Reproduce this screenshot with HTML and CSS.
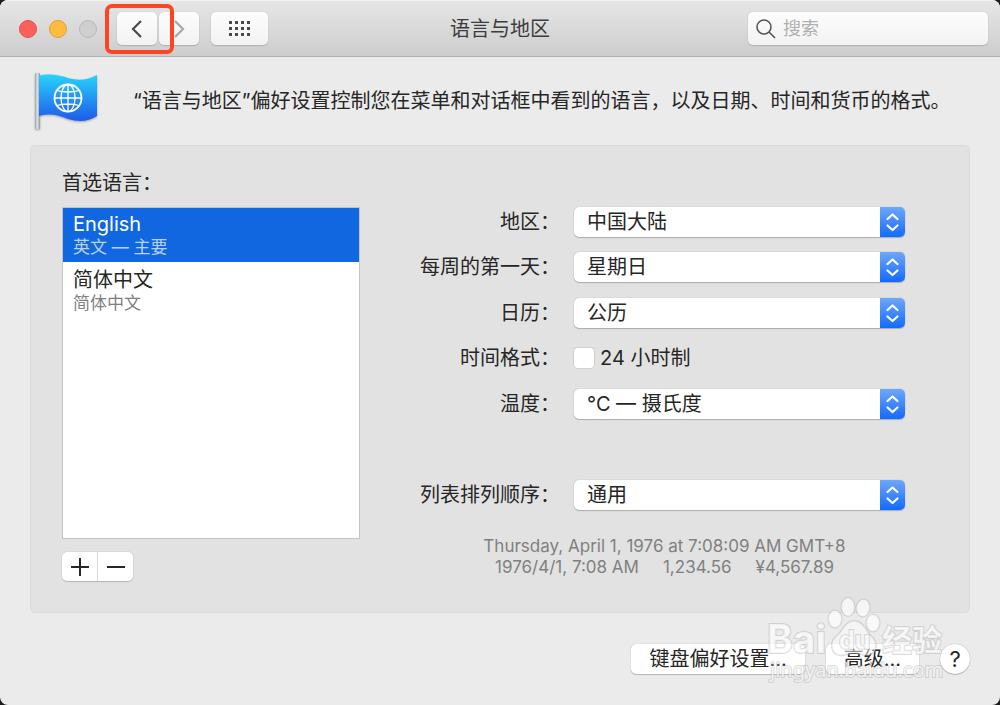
FILE: index.html
```html
<!DOCTYPE html>
<html lang="zh-CN">

<head>
    <meta charset="UTF-8">
    <meta name="viewport" content="width=device-width, initial-scale=1.0">
    <title>语言与地区</title>
    <link rel="stylesheet" href="styles.css">
</head>

<body>
    <div class="window">
        <header class="titlebar">
            <div class="tools">
                <div class="lights">
                    <button class="light red" aria-label="关闭"></button>
                    <button class="light yellow" aria-label="最小化"></button>
                    <button class="light grey" aria-label="缩放" disabled></button>
                </div>
                <div class="nav">
                    <button class="tool back" aria-label="后退">
                        <svg width="12" height="20" viewBox="0 0 12 20">
                            <path d="M10 2 L2 10 L10 18" />
                        </svg>
                    </button>
                    <button class="tool forward" aria-label="前进">
                        <svg width="12" height="20" viewBox="0 0 12 20">
                            <path d="M2 2 L10 10 L2 18" />
                        </svg>
                    </button>
                    <span class="mark"></span>
                </div>
                <button class="tool all" aria-label="显示全部">
                    <svg width="21" height="15" viewBox="0 0 21 15">
                        <path d="M0 1.500h21M0 7.500h21M0 13.500h21" />
                    </svg>
                </button>
            </div>
            <h1 class="title">语言与地区</h1>
            <label class="search">
                <svg width="20" height="20" viewBox="0 0 20 20">
                    <circle cx="8" cy="8" r="7" />
                    <path d="M13 13 L19 19" />
                </svg>
                <input type="search" placeholder="搜索" aria-label="搜索">
            </label>
        </header>

        <main class="content">
            <div class="intro">
                <svg class="flag" width="68" height="62" viewBox="0 0 68 62">
                    <defs>
                        <linearGradient id="cloth" x1="0" y1="0" x2="0" y2="1">
                            <stop offset="0" stop-color="#28d3fb" />
                            <stop offset="1" stop-color="#1f59ea" />
                        </linearGradient>
                        <linearGradient id="pole" x1="0" y1="0" x2="1" y2="0">
                            <stop offset="0" stop-color="#9aa3a9" />
                            <stop offset="0.45" stop-color="#dfe4e7" />
                            <stop offset="1" stop-color="#8f989e" />
                        </linearGradient>
                    </defs>
                    <rect x="5" y="3" width="5" height="56" rx="1" fill="url(#pole)" />
                    <path d="M9 6 C18 3 29 5 38 8 C49 11 58 10 67 5 V46 C58 52 48 52 38 49 C29 45 19 43 9 46 Z"
                        fill="url(#cloth)" />
                    <g fill="none" stroke="#fff" stroke-width="1.3">
                        <circle cx="38" cy="28" r="13.5" stroke-width="1.8" />
                        <ellipse cx="38" cy="28" rx="7" ry="13.5" />
                        <path d="M38 14.5v27M24.5 28h27M27 20.500c6 2 16 2 22 0M27 35.500c6 -2 16 -2 22 0" />
                    </g>
                </svg>
                <p>“语言与地区”偏好设置控制您在菜单和对话框中看到的语言，以及日期、时间和货币的格式。</p>
            </div>

            <div class="panel">
                <section class="languages">
                    <h2 id="preferred">首选语言：</h2>
                    <ul class="list" role="listbox" aria-labelledby="preferred">
                        <li class="selected" role="option" aria-selected="true">
                            <span>English</span>
                            <small>英文 — 主要</small>
                        </li>
                        <li role="option" aria-selected="false">
                            <span>简体中文</span>
                            <small>简体中文</small>
                        </li>
                    </ul>
                    <div class="edit">
                        <button aria-label="添加">
                            <svg width="18" height="18" viewBox="0 0 18 18">
                                <path d="M0 9h18M9 0v18" />
                            </svg>
                        </button>
                        <button aria-label="移除">
                            <svg width="18" height="18" viewBox="0 0 18 18">
                                <path d="M0 9h18" />
                            </svg>
                        </button>
                    </div>
                </section>

                <form class="fields">
                    <div class="group">
                        <label class="caption" for="region">地区：</label>
                        <div class="popup">
                            <select id="region">
                                <option>中国大陆</option>
                            </select>
                            <svg viewBox="0 0 25 30">
                                <path d="M7.500 12 L12.500 7.500 L17.500 12M7.500 18.500 L12.500 23 L17.500 18.500" />
                            </svg>
                        </div>
                        <label class="caption" for="week">每周的第一天：</label>
                        <div class="popup">
                            <select id="week">
                                <option>星期日</option>
                            </select>
                            <svg viewBox="0 0 25 30">
                                <path d="M7.500 12 L12.500 7.500 L17.500 12M7.500 18.500 L12.500 23 L17.500 18.500" />
                            </svg>
                        </div>
                    </div>
                    <div class="group">
                        <label class="caption" for="calendar">日历：</label>
                        <div class="popup">
                            <select id="calendar">
                                <option>公历</option>
                            </select>
                            <svg viewBox="0 0 25 30">
                                <path d="M7.500 12 L12.500 7.500 L17.500 12M7.500 18.500 L12.500 23 L17.500 18.500" />
                            </svg>
                        </div>
                        <span class="caption">时间格式：</span>
                        <label class="check">
                            <input type="checkbox">
                            24 小时制
                        </label>
                    </div>
                    <div class="group">
                        <label class="caption" for="temperature">温度：</label>
                        <div class="popup">
                            <select id="temperature">
                                <option>°C — 摄氏度</option>
                            </select>
                            <svg viewBox="0 0 25 30">
                                <path d="M7.500 12 L12.500 7.500 L17.500 12M7.500 18.500 L12.500 23 L17.500 18.500" />
                            </svg>
                        </div>
                    </div>
                    <div class="group apart">
                        <label class="caption" for="order">列表排列顺序：</label>
                        <div class="popup">
                            <select id="order">
                                <option>通用</option>
                            </select>
                            <svg viewBox="0 0 25 30">
                                <path d="M7.500 12 L12.500 7.500 L17.500 12M7.500 18.500 L12.500 23 L17.500 18.500" />
                            </svg>
                        </div>
                    </div>
                    <div class="sample">
                        <div>Thursday, April 1, 1976 at 7:08:09 AM GMT+8</div>
                        <div class="numbers">
                            <span>1976/4/1, 7:08 AM</span>
                            <span>1,234.56</span>
                            <span>¥4,567.89</span>
                        </div>
                    </div>
                </form>
            </div>

            <footer class="actions">
                <button class="push">键盘偏好设置...</button>
                <button class="push">高级...</button>
                <button class="help" aria-label="帮助">?</button>
            </footer>
        </main>

        <div class="watermark">
            <svg width="190" height="94" viewBox="0 0 190 94">
                <ellipse cx="75" cy="22" rx="6.500" ry="8.500" />
                <ellipse cx="88" cy="10" rx="6.500" ry="9" />
                <ellipse cx="103" cy="11" rx="6.500" ry="8.500" transform="rotate(8 103 11)" />
                <ellipse cx="113" cy="26" rx="6.500" ry="8.500" />
                <path class="pad" d="M94 24 C103 24 106 34 111 39 C118 45 118 57 107 58 C102 58 99 56 94 56 C88 56 84 59 79 58 C70 56 70 44 77 39 C83 34 85 24 94 24 Z" />
                <text class="logo" x="7" y="56">Bai</text>
                <text class="du" x="79" y="52">du</text>
                <text class="word" x="122" y="54">经验</text>
                <text class="site" x="10" y="80">jingyan.baidu.com</text>
            </svg>
        </div>
    </div>
</body>

</html>
```
FILE: styles.css
```css
* {
    box-sizing: border-box;
}

body {
    margin: 0;
    background: #1c1c1c;
    font-family: Inter, "Noto Sans CJK SC", sans-serif;
    font-size: 20px;
    line-height: 30px;
    color: #262626;
}

h1,
h2,
p,
ul {
    margin: 0;
    padding: 0;
    font-size: 20px;
    font-weight: 400;
}

button,
input,
select {
    margin: 0;
    padding: 0;
    border: 0;
    font: inherit;
    color: inherit;
}

svg {
    display: block;
}

.window {
    position: relative;
    min-height: 100vh;
    background: #ebebeb;
    border-radius: 8px;
    overflow: hidden;
}

/* title bar */

.titlebar {
    display: grid;
    grid-template-columns: 1fr auto 1fr;
    align-items: center;
    height: 57px;
    padding: 0 12px;
    background: linear-gradient(#e6e6e6, #cdcdcd);
    border-top: 1px solid #f3f3f3;
    border-bottom: 1px solid #b0b0b0;
}

.tools,
.lights,
.nav {
    display: flex;
    align-items: center;
}

.tools {
    gap: 12px;
    padding-left: 7px;
}

.lights {
    gap: 12px;
    margin-right: 8px;
}

.light {
    width: 18px;
    height: 18px;
    border: 1px solid;
    border-radius: 50%;
}

.red {
    background: #fc605c;
    border-color: #e2504b;
}

.yellow {
    background: #fdbc40;
    border-color: #dfa034;
}

.grey {
    background: #cfcfcf;
    border-color: #b9b9b9;
}

.nav {
    position: relative;
    gap: 2px;
}

.tool {
    display: flex;
    align-items: center;
    justify-content: center;
    width: 40px;
    height: 33px;
    background: linear-gradient(#fdfdfd, #f2f2f2);
    border-radius: 5px;
    box-shadow: 0 0 1px 0 #a8a8a8, 0 1px 1px 0 #b0b0b0;
}

.tool path {
    fill: none;
    stroke: #4a4a4a;
    stroke-width: 2.2;
}

.forward path {
    stroke: #a8a8a8;
}

.all {
    width: 57px;
}

.all path {
    stroke-width: 3;
    stroke-dasharray: 3;
}

/* red frame round the back button */
.mark {
    position: absolute;
    left: -12px;
    top: -8px;
    width: 69px;
    height: 50px;
    border: 4px solid #fb4523;
    border-radius: 7px;
}

.title {
    color: #3c3c3c;
}

.search {
    display: flex;
    align-items: center;
    justify-self: end;
    gap: 7px;
    width: 240px;
    height: 33px;
    padding: 0 8px;
    background: linear-gradient(#fdfdfd, #f2f2f2);
    border-radius: 5px;
    box-shadow: 0 0 1px 0 #a8a8a8, 0 1px 1px 0 #b0b0b0;
}

.search svg {
    flex: none;
    fill: none;
    stroke: #555;
    stroke-width: 1.6;
}

.search input {
    width: 100%;
    background: none;
    font-size: 18px;
    outline: none;
}

.search input::placeholder {
    color: #b0b0b0;
}

/* content */

.content {
    padding: 12px 30px 30px;
}

.intro {
    display: flex;
    align-items: center;
    gap: 35px;
    height: 64px;
}

.flag {
    flex: none;
    filter: drop-shadow(0 1px 1px rgba(0, 0, 0, 0.3));
}

.panel {
    display: flex;
    gap: 60px;
    margin-top: 12px;
    padding: 22px 64px 31px 31px;
    background: #e2e2e2;
    border: 1px solid #dadada;
    border-radius: 5px;
}

.languages {
    display: flex;
    flex-direction: column;
    width: 298px;
}

.list {
    height: 332px;
    margin-top: 9px;
    background: #fff;
    border: 1px solid #c4c4c4;
    list-style: none;
}

.list li {
    display: flex;
    flex-direction: column;
    height: 54px;
    padding: 4px 10px;
    margin-bottom: 2px;
}

.list span {
    line-height: 24px;
}

.list small {
    font-size: 17px;
    line-height: 23px;
    color: #808080;
}

.list .selected {
    background: #1167df;
    color: #fff;
}

.list .selected small {
    color: #b8d2f6;
}

.edit {
    display: flex;
    align-self: flex-start;
    gap: 1px;
    margin-top: 13px;
    background: #d8d8d8;
    border-radius: 5px;
    box-shadow: 0 0 1px 0 #999, 0 1px 1px 0 #b8b8b8;
    overflow: hidden;
}

.edit button {
    display: flex;
    align-items: center;
    justify-content: center;
    width: 35px;
    height: 29px;
    background: #fff;
}

.edit path {
    stroke: #262626;
    stroke-width: 2;
}

/* settings */

.fields {
    display: flex;
    flex: 1;
    flex-direction: column;
    gap: 16px;
    padding-top: 39px;
}

.group {
    display: grid;
    grid-template-columns: 140px 1fr;
    gap: 15px 14px;
    white-space: nowrap;
}

.apart {
    margin-top: 45px;
}

.caption {
    text-align: right;
}

.popup {
    display: grid;
    height: 30px;
    background: #fff;
    border-radius: 5px;
    box-shadow: 0 0 1px 0 #999, 0 1px 1px 0 #b0b0b0;
    overflow: hidden;
}

.popup select,
.popup svg {
    grid-area: 1 / 1;
}

.popup select {
    width: 100%;
    height: 30px;
    padding: 0 13px;
    background: none;
    appearance: none;
}

.popup svg {
    justify-self: end;
    width: 25px;
    height: 30px;
    background: linear-gradient(#6fa7f8, #126aff);
    pointer-events: none;
}

.popup path {
    fill: none;
    stroke: #fff;
    stroke-width: 2.2;
    stroke-linecap: round;
    stroke-linejoin: round;
}

.check {
    display: flex;
    align-items: center;
    gap: 6px;
}

.check input {
    width: 20px;
    height: 20px;
    background: #fff;
    border-radius: 4px;
    box-shadow: 0 0 1px 1px #cfcfcf;
    appearance: none;
}

.sample {
    padding: 10px 0 0 4px;
    font-size: 17px;
    line-height: 21px;
    text-align: center;
    color: #808080;
}

.numbers {
    display: flex;
    justify-content: center;
    gap: 24px;
}

/* bottom buttons */

.actions {
    display: flex;
    justify-content: flex-end;
    gap: 21px;
    margin-top: 31px;
}

.push,
.help {
    height: 30px;
    padding: 0 18px;
    background: #fff;
    border-radius: 5px;
    box-shadow: 0 0 1px 0 #999, 0 1px 1px 0 #b8b8b8;
}

.help {
    width: 30px;
    padding: 0;
    border-radius: 50%;
    font-size: 22px;
}

.watermark {
    position: absolute;
    right: 50px;
    bottom: 14px;
    pointer-events: none;
}

.watermark svg {
    fill: rgba(255, 255, 255, 0.7);
    stroke: rgba(160, 160, 160, 0.35);
    paint-order: stroke;
    stroke-width: 2;
    overflow: visible;
}

.watermark .pad {
    fill: rgba(255, 255, 255, 0.5);
}

.logo {
    font-size: 39px;
    font-weight: 700;
}

.du {
    font-size: 25px;
    font-weight: 700;
}

.word {
    font-size: 30px;
    font-weight: 700;
}

.site {
    font-family: "Noto Sans", sans-serif;
    font-size: 20px;
}
```
